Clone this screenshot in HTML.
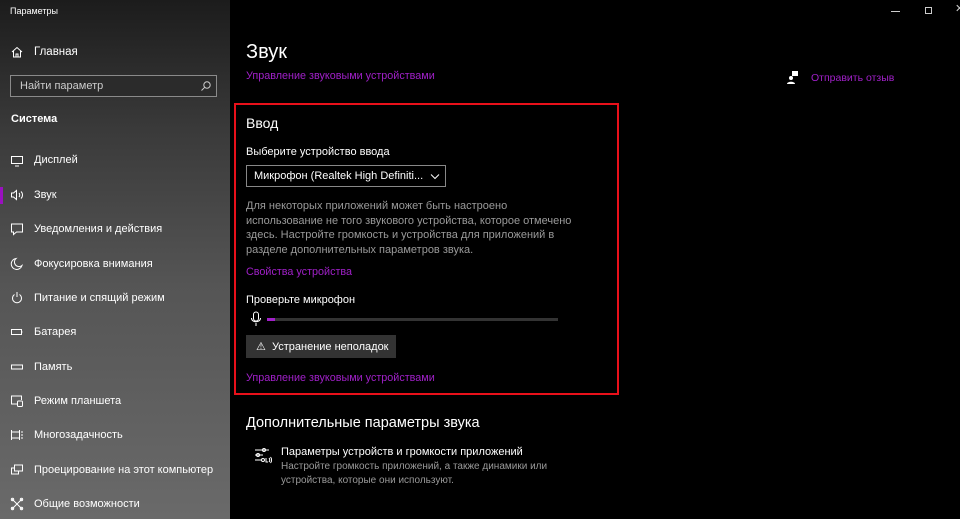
<!DOCTYPE html>
<html><head><meta charset="utf-8"><style>
*{margin:0;padding:0;box-sizing:border-box}
body{width:960px;height:519px;overflow:hidden;background:#000;font-family:"Segoe UI","Liberation Sans",sans-serif;color:#fff;position:relative}
.side{position:absolute;left:0;top:0;width:230px;height:519px;background:linear-gradient(180deg,#1c1c1c 0%,#3a3a3a 25%,#555 55%,#6a6a6a 100%)}
.a{position:absolute;white-space:nowrap}
.nav{position:absolute;left:34px;font-size:11px;color:#fff;margin-top:1px}
.ic{position:absolute;left:10px;width:14px;height:14px}
.p{color:#a020c8;font-size:10.8px}
.g{color:#9a9a9a}
</style></head><body>
<div class="side">
<div class="a" style="left:10px;top:6px;font-size:9px">Параметры</div>
<svg class="ic" style="top:45px" viewBox="0 0 14 14" fill="none" stroke="#fff" stroke-width="1"><path d="M2 7L7 2.5 12 7M3.5 6v6h7V6M6 12V9h2v3"/></svg>
<div class="nav" style="top:45px;font-size:11.5px">Главная</div>
<div class="a" style="left:10px;top:75px;width:207px;height:22px;border:1px solid #8a8a8a;background:#2b2b2b"></div>
<div class="a" style="left:20px;top:80px;font-size:11px;color:#ccc">Найти параметр</div>
<svg class="a" style="left:200px;top:80px" width="12" height="12" viewBox="0 0 12 12" fill="none" stroke="#ccc"><circle cx="7" cy="5" r="3.2"/><path d="M4.7 7.3L1.5 10.5"/></svg>
<div class="a" style="left:11px;top:113px;font-size:11px;font-weight:bold">Система</div>
<div class="a" style="left:0;top:187px;width:3px;height:17px;background:#9a10c0"></div>
<svg class="ic" style="top:154px" viewBox="0 0 14 14" fill="none" stroke="#fff"><rect x="1.5" y="2.5" width="11" height="7"/><path d="M5 12h4"/></svg>
<div class="nav" style="top:153px">Дисплей</div>
<svg class="ic" style="top:188px" viewBox="0 0 14 14" fill="none" stroke="#fff"><path d="M1.5 5h2l3-2.5v9l-3-2.5h-2z M9 5c1 1 1 3 0 4M11 3.5c2 2 2 5 0 7"/></svg>
<div class="nav" style="top:188px">Звук</div>
<svg class="ic" style="top:222px" viewBox="0 0 14 14" fill="none" stroke="#fff"><path d="M1.5 2h11v8h-6l-3 2.5V10h-2z"/></svg>
<div class="nav" style="top:222px">Уведомления и действия</div>
<svg class="ic" style="top:257px" viewBox="0 0 14 14" fill="none" stroke="#fff"><path d="M6 1.5a5.5 5.5 0 1 0 6 7a4.5 4.5 0 0 1-6-7z"/></svg>
<div class="nav" style="top:257px">Фокусировка внимания</div>
<svg class="ic" style="top:291px" viewBox="0 0 14 14" fill="none" stroke="#fff"><path d="M4.5 3.5a4.5 4.5 0 1 0 5 0M7 1v5"/></svg>
<div class="nav" style="top:291px">Питание и спящий режим</div>
<svg class="ic" style="top:325px" viewBox="0 0 14 14" fill="none" stroke="#fff"><rect x="1.5" y="4.5" width="10" height="5"/><path d="M12 6.5v1"/></svg>
<div class="nav" style="top:325px">Батарея</div>
<svg class="ic" style="top:360px" viewBox="0 0 14 14" fill="none" stroke="#fff"><rect x="1.5" y="5" width="11" height="4"/></svg>
<div class="nav" style="top:360px">Память</div>
<svg class="ic" style="top:394px" viewBox="0 0 14 14" fill="none" stroke="#fff"><path d="M7 10H1.5V2h10v4"/><rect x="7.5" y="7" width="5" height="5.5" rx="1"/></svg>
<div class="nav" style="top:394px">Режим планшета</div>
<svg class="ic" style="top:428px" viewBox="0 0 14 14" fill="none" stroke="#fff"><path d="M1.5 2v10M9.5 2v10M1.5 4h8M1.5 10h8M12 3v2M12 6v2M12 9v2"/></svg>
<div class="nav" style="top:428px">Многозадачность</div>
<svg class="ic" style="top:463px" viewBox="0 0 14 14" fill="none" stroke="#fff"><rect x="4.5" y="2" width="8" height="6"/><path d="M4.5 5H1.5v6h7V8"/></svg>
<div class="nav" style="top:463px">Проецирование на этот компьютер</div>
<svg class="ic" style="top:497px" viewBox="0 0 14 14" fill="none" stroke="#fff"><path d="M2 2l10 10M12 2L2 12"/><circle cx="2.5" cy="2.5" r="1.2"/><circle cx="11.5" cy="2.5" r="1.2"/><circle cx="2.5" cy="11.5" r="1.2"/><circle cx="11.5" cy="11.5" r="1.2"/></svg>
<div class="nav" style="top:497px">Общие возможности</div>
</div>

<div class="a" style="left:891px;top:11px;width:9px;border-top:1px solid #ccc"></div>
<div class="a" style="left:925px;top:7px;width:7px;height:7px;border:1px solid #ccc"></div>
<div class="a" style="left:955px;top:2px;font-size:11px;color:#ccc">✕</div>

<div class="a" style="left:246px;top:41px;font-size:20px">Звук</div>
<div class="a p" style="left:246px;top:70px">Управление звуковыми устройствами</div>
<svg class="a" style="left:787px;top:71px" width="12" height="14" viewBox="0 0 12 14" fill="#fff"><rect x="5" y="0" width="6" height="5"/><circle cx="4" cy="7" r="2"/><path d="M0 13c0-3 8-3 8 0z"/></svg>
<div class="a p" style="left:811px;top:72px;font-size:10.5px">Отправить отзыв</div>

<div class="a" style="left:234px;top:103px;width:385px;height:292px;border:2px solid #e8101a"></div>
<div class="a" style="left:246px;top:115px;font-size:14px">Ввод</div>
<div class="a" style="left:246px;top:146px;font-size:11px">Выберите устройство ввода</div>
<div class="a" style="left:246px;top:165px;width:200px;height:22px;border:1px solid #888"></div>
<div class="a" style="left:254px;top:170px;font-size:11px">Микрофон (Realtek High Definiti...</div>
<svg class="a" style="left:430px;top:173px" width="10" height="7" viewBox="0 0 10 7" fill="none" stroke="#fff"><path d="M1 1.5l4 4 4-4"/></svg>
<div class="a g" style="left:246px;top:199px;font-size:11px;line-height:14.7px">Для некоторых приложений может быть настроено<br>использование не того звукового устройства, которое отмечено<br>здесь. Настройте громкость и устройства для приложений в<br>разделе дополнительных параметров звука.</div>
<div class="a p" style="left:246px;top:266px">Свойства устройства</div>
<div class="a" style="left:246px;top:294px;font-size:11px">Проверьте микрофон</div>
<svg class="a" style="left:250px;top:311px" width="12" height="16" viewBox="0 0 12 16" fill="none" stroke="#fff"><rect x="3.5" y="1" width="5" height="9" rx="2.5"/><path d="M1.5 7c0 5 9 5 9 0M6 12v3"/></svg>
<div class="a" style="left:267px;top:318px;width:291px;height:3px;background:#333"></div>
<div class="a" style="left:267px;top:318px;width:8px;height:3px;background:#a020c8"></div>
<div class="a" style="left:246px;top:335px;width:150px;height:23px;background:#333"></div>
<div class="a" style="left:256px;top:340px;font-size:11px">⚠&nbsp; Устранение неполадок</div>
<div class="a p" style="left:246px;top:372px">Управление звуковыми устройствами</div>

<div class="a" style="left:246px;top:415px;font-size:14.5px">Дополнительные параметры звука</div>
<svg class="a" style="left:254px;top:447px" width="18" height="18" viewBox="0 0 18 18" fill="none" stroke="#fff"><path d="M1 3h14M1 8h8M1 13h6"/><circle cx="10" cy="3" r="1.5"/><circle cx="4" cy="8" r="1.5"/><circle cx="9" cy="13" r="1.5"/><path d="M12 11v4l2 0M15 11c1 1 1 3 0 4M16.5 10c1.5 2 1.5 4 0 6"/></svg>
<div class="a" style="left:281px;top:446px;font-size:11px">Параметры устройств и громкости приложений</div>
<div class="a g" style="left:281px;top:460px;font-size:10px;line-height:14px">Настройте громкость приложений, а также динамики или<br>устройства, которые они используют.</div>
</body></html>
